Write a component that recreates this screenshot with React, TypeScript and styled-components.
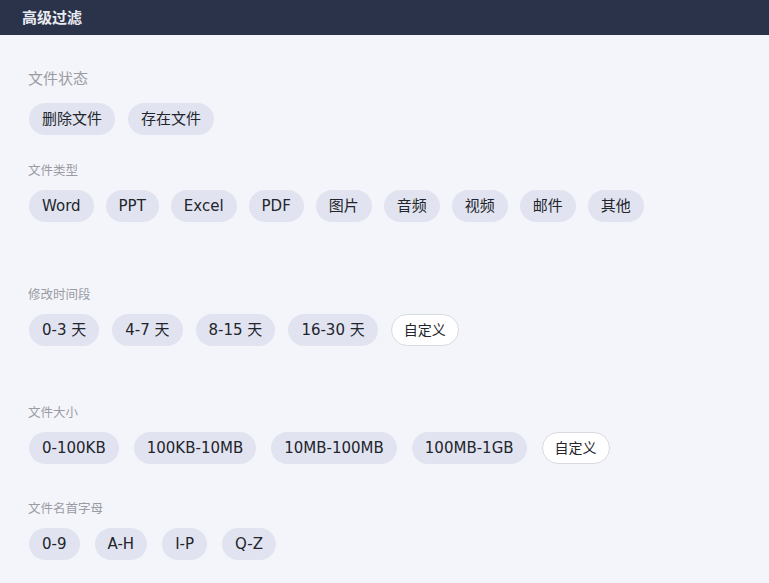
import React from "react";
import styled, { createGlobalStyle } from "styled-components";

const Global = createGlobalStyle`
  html, body { margin: 0; padding: 0; background: #f4f5fa; }
  body { font-family: "Noto Sans", "Noto Sans CJK SC", sans-serif; }
  * { box-sizing: border-box; }
`;

const Page = styled.div`
  width: 769px;
  min-height: 583px;
  background: #f4f5fa;
  display: flex;
  flex-direction: column;
`;

const Header = styled.header`
  height: 35px;
  background: #2b334b;
  display: flex;
  align-items: center;
  padding: 0 0 3px 22px;
`;

const Title = styled.h1`
  margin: 0;
  font-size: 15px;
  font-weight: 700;
  color: #e9ebf0;
  letter-spacing: 0;
`;

const Content = styled.main`
  padding: 33px 28px 0 29px;
  display: flex;
  flex-direction: column;
`;

const Section = styled.section<{ $gap: number }>`
  margin-top: ${(p) => p.$gap}px;
  display: flex;
  flex-direction: column;
`;

const Label = styled.div<{ $big?: boolean }>`
  font-size: ${(p) => (p.$big ? 15 : 12.5)}px;
  line-height: 20px;
  color: #9a9ba3;
  margin-bottom: ${(p) => (p.$big ? 15 : 9)}px;
  margin-left: -1px;
`;

const Row = styled.div<{ $gap: number }>`
  display: flex;
  flex-wrap: wrap;
  gap: ${(p) => p.$gap}px;
`;

const Chip = styled.button<{ $custom?: boolean }>`
  height: 32px;
  padding: 0 ${(p) => (p.$custom ? 12 : 13)}px;
  border-radius: 16px;
  border: ${(p) => (p.$custom ? "1px solid #d9dbe3" : "none")};
  background: ${(p) => (p.$custom ? "#ffffff" : "#e1e4f0")};
  color: #23252c;
  font-family: "DejaVu Sans", "Noto Sans CJK SC", sans-serif;
  font-size: ${(p) => (p.$custom ? 14 : 15)}px;
  line-height: 1;
  display: inline-flex;
  align-items: center;
  cursor: pointer;
  white-space: nowrap;
`;

type Group = {
  label: string;
  big?: boolean;
  gap: number;
  rowGap?: number;
  items: string[];
  custom?: boolean;
};

const groups: Group[] = [
  { label: "文件状态", big: true, gap: 0, items: ["删除文件", "存在文件"] },
  { label: "文件类型", gap: 26, rowGap: 12, items: ["Word", "PPT", "Excel", "PDF", "图片", "音频", "视频", "邮件", "其他"] },
  { label: "修改时间段", gap: 63, items: ["0-3 天", "4-7 天", "8-15 天", "16-30 天"], custom: true },
  { label: "文件大小", gap: 57, rowGap: 15, items: ["0-100KB", "100KB-10MB", "10MB-100MB", "100MB-1GB"], custom: true },
  { label: "文件名首字母", gap: 35, rowGap: 15, items: ["0-9", "A-H", "I-P", "Q-Z"] },
];

export default function App() {
  return (
    <Page>
      <Global />
      <Header>
        <Title>高级过滤</Title>
      </Header>
      <Content>
        {groups.map((g) => (
          <Section key={g.label} $gap={g.gap}>
            <Label $big={g.big}>{g.label}</Label>
            <Row $gap={g.rowGap ?? 13}>
              {g.items.map((it) => (
                <Chip key={it}>{it}</Chip>
              ))}
              {g.custom && <Chip $custom>自定义</Chip>}
            </Row>
          </Section>
        ))}
      </Content>
    </Page>
  );
}
